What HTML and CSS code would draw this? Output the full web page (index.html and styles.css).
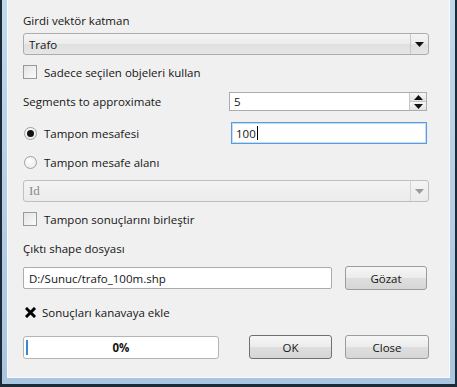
FILE: index.html
```html
<!DOCTYPE html>
<html>
<head>
<meta charset="utf-8">
<link rel="stylesheet" href="styles.css">
</head>
<body>
<div class="frame">
  <div class="glass">
    <div class="content">
      <div class="row label r1">Girdi vektör katman</div>
      <div class="combo r2 wide"><span class="ctext">Trafo</span><span class="carrow"><svg width="9" height="5" viewBox="0 0 9 5"><path d="M0 0H9L4.5 5Z" fill="#111"/></svg></span></div>
      <div class="row check r3"><span class="box"></span><span>Sadece seçilen objeleri kullan</span></div>
      <div class="row split r4">
        <span class="lbl">Segments to approximate</span>
        <div class="spin"><span class="stext">5</span><span class="sbtns"><span class="sb"><svg width="9" height="5" viewBox="0 0 9 5"><path d="M0 5H9L4.5 0Z" fill="#111"/></svg></span><span class="sb"><svg width="9" height="5" viewBox="0 0 9 5"><path d="M0 0H9L4.5 5Z" fill="#111"/></svg></span></span></div>
      </div>
      <div class="row split r5">
        <span class="radio-l"><span class="radio on"><span class="dot"></span></span><span>Tampon mesafesi</span></span>
        <div class="edit focus"><span>100</span><span class="caret"></span></div>
      </div>
      <div class="row r6"><span class="radio-l"><span class="radio"></span><span>Tampon mesafe alanı</span></span></div>
      <div class="combo r7 wide disabled"><span class="ctext serif">Id</span><span class="carrow"><svg width="9" height="5" viewBox="0 0 9 5"><path d="M0 0H9L4.5 5Z" fill="#9a9a9a"/></svg></span></div>
      <div class="row check r8"><span class="box"></span><span>Tampon sonuçlarını birleştir</span></div>
      <div class="row label r9">Çıktı shape dosyası</div>
      <div class="row r10 pathrow">
        <div class="edit path">D:/Sunuc/trafo_100m.shp</div>
        <div class="btn browse">Gözat</div>
      </div>
      <div class="row check r11 checked"><span class="box2"><svg width="11" height="11" viewBox="0 0 11 11"><path d="M2 2L9 9M9 2L2 9" stroke="#000" stroke-width="3" stroke-linecap="square"/></svg></span><span>Sonuçları kanavaya ekle</span></div>
      <div class="row r12 bottom">
        <div class="progress"><span class="chunk"></span><span class="pct">0%</span></div>
        <div class="btn ok">OK</div>
        <div class="btn close">Close</div>
      </div>
    </div>
  </div>
</div>
</body>
</html>
```

FILE: styles.css
```css
html, body {
  margin: 0;
  padding: 0;
}
body {
  width: 457px;
  height: 387px;
  overflow: hidden;
  font-family: "Open Sans", "Noto Sans", sans-serif;
  font-size: 11.5px;
  color: #151515;
}
.frame {
  box-sizing: border-box;
  width: 457px;
  height: 387px;
  background: #1d2b38;
  padding: 0 2px 3px 2px;
}
.glass {
  box-sizing: border-box;
  height: 100%;
  background: linear-gradient(#c3d7ec, #aac5e0);
  padding: 0 5px 6px 5px;
}
.content {
  box-sizing: border-box;
  height: 100%;
  background: #f0f0f0;
  border-left: 1px solid #f8fbfe;
  border-right: 1px solid #f8fbfe;
  border-bottom: 1px solid #f8fbfe;
  padding: 12px 0 0 15px;
  display: flex;
  flex-direction: column;
}
.row {
  display: flex;
  align-items: center;
}
.label { height: 16px; }
.r1 { margin-top: 0; }
.r2 { margin-top: 5px; }
.r3 { margin-top: 9px; height: 16px; }
.r4 { margin-top: 12px; height: 19px; }
.r5 { margin-top: 11px; height: 22px; }
.r6 { margin-top: 10px; height: 16px; }
.r7 { margin-top: 10px; }
.r8 { margin-top: 9px; height: 16px; }
.r9 { margin-top: 13px; }
.r10 { margin-top: 10px; height: 24px; }
.r11 { margin-top: 14px; height: 16px; }
.r12 { margin-top: 15px; height: 24px; }

.combo {
  box-sizing: border-box;
  width: 406px;
  height: 22px;
  border: 1px solid #acacac;
  border-radius: 3px;
  background: linear-gradient(#f4f4f4 0%, #ececec 50%, #e0e0e0 51%, #e6e6e6 100%);
  display: flex;
  align-items: center;
}
.ctext {
  flex: 1;
  padding-left: 5px;
}
.carrow {
  width: 17px;
  height: 100%;
  border-left: 1px solid #c8c8c8;
  display: flex;
  align-items: center;
  justify-content: center;
}
.disabled {
  border-color: #bfbfbf;
  background: linear-gradient(#f4f4f4, #ebebeb);
}
.disabled .carrow { border-left-color: #d4d4d4; }
.serif {
  font-family: "Liberation Serif", "DejaVu Serif", serif;
  font-size: 13px;
  color: #8a8a8a;
}

.check { gap: 7px; }
.box {
  box-sizing: border-box;
  width: 14px;
  height: 14px;
  border: 1px solid #9a9a9a;
  background: linear-gradient(135deg, #e4e4e4, #fafafa);
}
.checked { gap: 6px; padding-left: 1px; }
.box2 {
  width: 12px;
  height: 12px;
  display: flex;
  align-items: center;
  justify-content: center;
}

.split {
  justify-content: space-between;
  width: 404px;
}
.spin {
  box-sizing: border-box;
  width: 198px;
  height: 19px;
  background: #fff;
  border: 1px solid #acacac;
  display: flex;
}
.stext {
  flex: 1;
  padding-left: 4px;
  line-height: 17px;
}
.sbtns {
  width: 16px;
  display: flex;
  flex-direction: column;
  border-left: 1px solid #c6c6c6;
}
.sb {
  flex: 1;
  display: flex;
  align-items: center;
  justify-content: center;
  background: linear-gradient(#f6f6f6, #e3e3e3);
}
.sb + .sb { border-top: 1px solid #c6c6c6; }

.radio-l {
  display: flex;
  align-items: center;
  gap: 7px;
  padding-left: 1px;
}
.radio {
  box-sizing: border-box;
  width: 13px;
  height: 13px;
  border-radius: 50%;
  border: 1px solid #a0a0a0;
  background: radial-gradient(circle at 40% 35%, #fff, #e6e6e6);
  display: flex;
  align-items: center;
  justify-content: center;
}
.dot {
  width: 7px;
  height: 7px;
  border-radius: 50%;
  background: #111;
}
.edit {
  box-sizing: border-box;
  background: #fff;
  border: 1px solid #acacac;
  display: flex;
  align-items: center;
  padding-left: 4px;
}
.focus {
  width: 196px;
  height: 22px;
  border: 1px solid #5a9bdc;
  box-shadow: inset 0 0 0 1px #c5def5;
}
.caret {
  width: 1px;
  height: 14px;
  background: #000;
  margin-left: 1px;
}
.pathrow { gap: 13px; }
.path {
  width: 309px;
  height: 22px;
  border-radius: 2px;
  padding-left: 5px;
}
.btn {
  box-sizing: border-box;
  height: 24px;
  border: 1px solid #9c9c9c;
  border-radius: 3px;
  background: linear-gradient(#f6f6f6 0%, #ececec 48%, #dedede 52%, #d6d6d6 100%);
  display: flex;
  align-items: center;
  justify-content: center;
}
.browse { width: 82px; }
.bottom { gap: 0; }
.progress {
  box-sizing: border-box;
  position: relative;
  width: 196px;
  height: 23px;
  background: #fff;
  border: 1px solid #b4b4b4;
  border-radius: 3px;
  display: flex;
  align-items: center;
  justify-content: center;
}
.chunk {
  position: absolute;
  left: 2px;
  top: 3px;
  bottom: 3px;
  width: 2px;
  background: #3d86d6;
}
.pct { font-weight: bold; }
.ok {
  width: 83px;
  margin-left: 30px;
  border-color: #707070;
}
.close {
  width: 84px;
  margin-left: 13px;
}
```
